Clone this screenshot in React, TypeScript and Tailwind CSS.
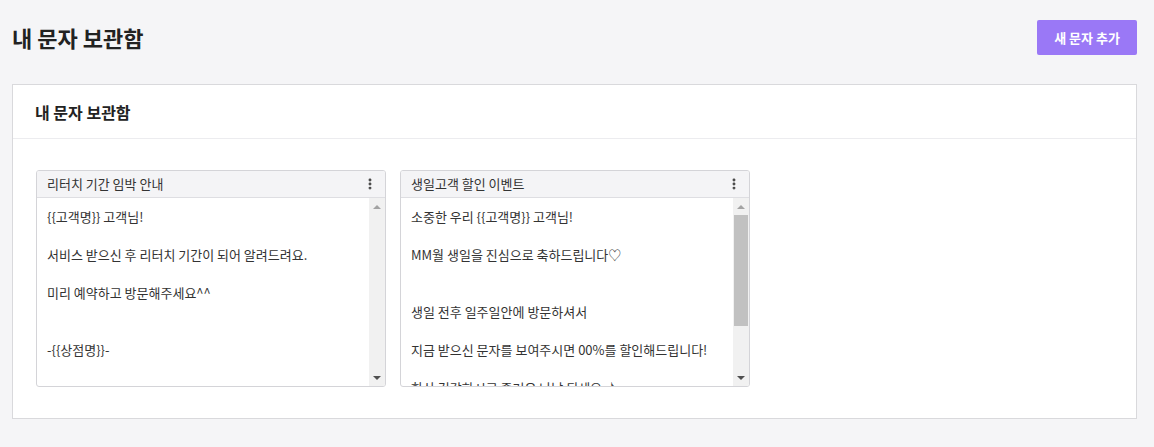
import { EllipsisVertical } from 'lucide-react';

const FONT = '"Noto Sans CJK KR", "Noto Sans", sans-serif';

// 보관함 문자 목록
const MESSAGES = [
  {
    title: '리터치 기간 임박 안내',
    lines: ['{{고객명}} 고객님!', '', '서비스 받으신 후 리터치 기간이 되어 알려드려요.', '', '미리 예약하고 방문해주세요^^', '', '', '-{{상점명}}-'],
    thumb: false,
  },
  {
    title: '생일고객 할인 이벤트',
    lines: [
      '소중한 우리 {{고객명}} 고객님!',
      '',
      'MM월 생일을 진심으로 축하드립니다♡',
      '',
      '',
      '생일 전후 일주일안에 방문하셔서',
      '',
      '지금 받으신 문자를 보여주시면 00%를 할인해드립니다!',
      '',
      '항상 건강하시고 즐거운 나날 되세요 ♪',
    ],
    thumb: true,
  },
];

function MessageCard({ title, lines, thumb }: { title: string; lines: string[]; thumb: boolean }) {
  return (
    <div className="w-[350px] border border-[#d4d4d8] rounded-[3px] bg-white flex flex-col overflow-hidden">
      <div className="h-[27px] bg-[#f4f4f6] border-b border-[#dedee2] flex items-center justify-between pl-[10px] pr-[8px]">
        <span className="text-[13px] text-[#333]">{title}</span>
        <EllipsisVertical size={14} strokeWidth={3} className="text-[#444]" />
      </div>
      <div className="flex h-[188px]">
        <div className="flex-1 overflow-hidden pt-[9px] px-[10px] text-[13px] leading-[19px] text-[#333]">
          {lines.map((line, i) => (
            <div key={i} className="h-[19px] whitespace-nowrap">{line}</div>
          ))}
        </div>
        {/* 스크롤바 */}
        <div className="w-[16px] bg-[#f1f1f1] flex flex-col items-center">
          <div className="h-[17px] flex items-center justify-center">
            <div className="w-0 h-0 border-x-[4px] border-x-transparent border-b-[4px] border-b-[#a3a3a3]" />
          </div>
          <div className="flex-1 w-full px-[1px]">
            {thumb && <div className="h-[111px] bg-[#c1c1c1]" />}
          </div>
          <div className="h-[17px] flex items-center justify-center">
            <div className="w-0 h-0 border-x-[4px] border-x-transparent border-t-[4px] border-t-[#505050]" />
          </div>
        </div>
      </div>
    </div>
  );
}

export default function App() {
  return (
    <div className="min-h-screen bg-[#f5f5f7] px-[12px] pt-[20px] pb-[29px] text-[#222]" style={{ fontFamily: FONT }}>
      <header className="flex items-start justify-between pr-[5px] mb-[29px]">
        <h1 className="text-[22px] font-bold leading-[35px] text-[#222]">내 문자 보관함</h1>
        <button className="w-[100px] h-[35px] rounded-[2px] bg-[#9a78f6] text-white text-[13px] font-bold">새 문자 추가</button>
      </header>

      <section className="mr-[5px] bg-white border border-[#d9d9dc]">
        <div className="h-[54px] border-b border-[#ececef] flex items-center px-[22px]">
          <h2 className="text-[16px] font-bold text-[#222]">내 문자 보관함</h2>
        </div>
        <div className="px-[23px] pt-[31px] pb-[31px] flex gap-[14px]">
          {MESSAGES.map((m) => (
            <MessageCard key={m.title} {...m} />
          ))}
        </div>
      </section>
    </div>
  );
}
